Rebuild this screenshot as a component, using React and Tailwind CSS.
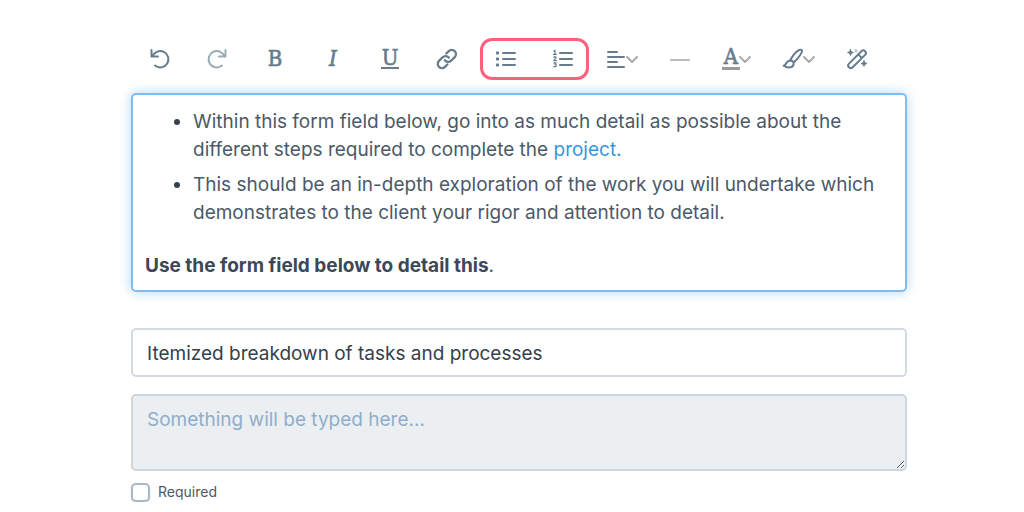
import { useState } from "react"

const stroke = {
    fill: "none",
    stroke: "currentColor",
    strokeWidth: 2,
    strokeLinecap: "round",
    strokeLinejoin: "round",
}

function Icon({ children, width = 22 }) {
    return (
        <svg width={width} height={22} viewBox={`0 0 ${width} 22`} aria-hidden="true" {...stroke}>
            {children}
        </svg>
    )
}

function ToolButton({ label, className = "text-[#667c8c]", children }) {
    return (
        <button
            type="button"
            aria-label={label}
            className={`flex h-6 items-center justify-center ${className}`}
        >
            {children}
        </button>
    )
}

function Letter({ children, className }) {
    return (
        <span className={`text-center font-['DejaVu_Serif_Condensed','DejaVu_Serif',serif] text-[22px] [-webkit-text-stroke:0.6px_currentColor] ${className}`}>
            {children}
        </span>
    )
}

function Chevron() {
    return (
        <svg width="12" height="8" viewBox="0 0 12 8" className="mt-0.5 -ml-px text-[#a9acae]" aria-hidden="true" {...stroke}>
            <path d="M1 1l5 5 5-5" />
        </svg>
    )
}

function Toolbar() {
    return (
        <div role="toolbar" className="flex items-center justify-between pr-[39px] pl-[18px]">
            <div className="flex items-center gap-[35px]">
                <ToolButton label="Undo">
                    <Icon>
                        <path d="M2.500 2v6.500h6.500M3.500 8.500A8.200 8.200 0 1 1 6 17.600" />
                    </Icon>
                </ToolButton>
                <ToolButton label="Redo" className="text-[#9aabb5]">
                    <Icon>
                        <path d="M19.500 2v6.500h-6.500M18.500 8.500A8.200 8.200 0 1 0 16 17.600" />
                    </Icon>
                </ToolButton>
                <ToolButton label="Bold"><Letter className="w-6 leading-6">B</Letter></ToolButton>
                <ToolButton label="Italic"><Letter className="w-[22px] leading-6 italic">I</Letter></ToolButton>
                <ToolButton label="Underline">
                    <span className="mx-0.5 flex flex-col items-center border-b-2 border-current">
                        <Letter className="h-[18px] w-[18px] leading-[18px]">U</Letter>
                    </span>
                </ToolButton>
                <ToolButton label="Insert link">
                    <Icon>
                        <g strokeWidth="2.3">
                            <path d="M8.800 12.300a4.300 4.300 0 0 0 6.300.4l3.600-3.600a4.200 4.200 0 0 0-6-6L10.300 5.500" />
                            <path d="M12.900 9.700a4.300 4.300 0 0 0-6.300-.4L3 12.900a4.200 4.200 0 0 0 6 6l2.400-2.400" />
                        </g>
                    </Icon>
                </ToolButton>

                {/* the two list buttons share one outline */}
                <div className="-ml-[13px] flex h-[42px] items-center gap-[35px] rounded-xl border-3 border-[#fd607a] px-3">
                    <ToolButton label="Bulleted list">
                        <Icon>
                            <path d="M8 5h12M8 11h12M8 17h12" />
                            <path d="M2.500 5h.01M2.500 11h.01M2.500 17h.01" strokeWidth="3.4" />
                        </Icon>
                    </ToolButton>
                    <ToolButton label="Numbered list">
                        <Icon>
                            <path d="M8 5h12M8 11h12M8 17h12" />
                            <path d="M1.800 3l1.200-.7v4M1.500 6.300h2.800M1.800 9.300c.8-1 2.500-.6 2.100.6L1.800 12.600h2.600M1.800 14.900h2.300l-1.200 1.500c2 0 1.800 2.500-.2 2.400l-1-.3" strokeWidth="1.2" />
                        </Icon>
                    </ToolButton>
                </div>
            </div>

            <div className="flex items-center gap-[31px]">
                <ToolButton label="Align">
                    <Icon width={20}>
                        <path d="M1 4h9M1 9h16M1 14h9M1 19h16" />
                    </Icon>
                    <Chevron />
                </ToolButton>
                <ToolButton label="Horizontal line" className="text-[#b8bbbd]">
                    <Icon>
                        <path d="M2 12h18" />
                    </Icon>
                </ToolButton>
                <ToolButton label="Text color">
                    <span className="flex flex-col items-center border-b-3 border-[#9a9a9a]">
                        <Letter className="h-[19px] w-[18px] leading-[18px]">A</Letter>
                    </span>
                    <Chevron />
                </ToolButton>
                <ToolButton label="Highlight color">
                    <Icon>
                        <path d="M8.500 11.500C11 7.500 15.500 2.500 18 1.800c1.800-.4 2.400.8 1.800 2.200-1 3-5 7.500-8 10.500zM8 12.500c2.500 0 4 1.500 3.600 3.700-.6 3.500-5.500 4.500-10 1.500 3-.6 2-4.800 6.400-5.200z" />
                    </Icon>
                    <Chevron />
                </ToolButton>
                <ToolButton label="Clear formatting">
                    <Icon>
                        <path d="M3 15.600L15.400 3.200a2.600 2.600 0 0 1 3.700 3.700L6.700 19.300A2.600 2.600 0 0 1 3 15.600zM12.200 6.400l3.700 3.700" />
                        <g fill="currentColor" strokeWidth="0.800">
                            <path d="M4.500 1.500l.9 2.100 2.100.9-2.100.9-.9 2.100-.9-2.100-2.100-.9 2.100-.9zM18 12.500l.9 2.100 2.100.9-2.100.9-.9 2.100-.9-2.100-2.100-.9 2.100-.9z" />
                            <path d="M10 1.500l.5 1 1 .5-1 .5-.5 1-.5-1-1-.5 1-.5z" opacity="0.5" />
                        </g>
                    </Icon>
                </ToolButton>
            </div>
        </div>
    )
}

export default function App() {
    const [title, setTitle] = useState("Itemized breakdown of tasks and processes")
    const [required, setRequired] = useState(false)

    return (
        <main className="bg-white pt-[38px] pr-[117px] pl-[131px] font-['Inter',sans-serif] text-[#4c5967]">
            <Toolbar />

            <section className="mt-[13px] rounded-[5px] border-2 border-[#7fbcf0] px-3 pt-[13px] pb-2.5 text-[19px] leading-7 shadow-[0_0_12px_rgba(66,153,225,0.4)]">
                <ul className="list-disc space-y-[7px] pl-12 marker:text-[#34424f]">
                    <li>
                        Within this form field below, go into as much detail as possible about the different steps
                        required to complete the <a href="#project" className="text-[#3498db]">project.</a>
                    </li>
                    <li>
                        This should be an in-depth exploration of the work you will undertake which demonstrates
                        to the client your rigor and attention to detail.
                    </li>
                </ul>
                <p className="mt-[25px]"><strong className="font-bold text-[#3b4857]">Use the form field below to detail this</strong>.</p>
            </section>

            <form>
                <input
                    type="text"
                    aria-label="Question title"
                    value={title}
                    onChange={(e) => setTitle(e.target.value)}
                    className="mt-9 block h-[49px] w-full rounded-[5px] border-2 border-[#d3dae1] px-3.5 pt-0.5 text-[19px] text-[#34404c]"
                />
                <textarea
                    aria-label="Answer"
                    placeholder="Something will be typed here..."
                    className="mt-[17px] block h-[77px] w-full resize-y rounded-[5px] border-2 border-[#cdd6dd] bg-[#ebeff2] px-3.5 py-2.5 text-[19px] leading-7 placeholder:text-[#8faecb]"
                />
                <label className="mt-[11px] flex w-fit items-center gap-2 text-sm">
                    <input
                        type="checkbox"
                        checked={required}
                        onChange={(e) => setRequired(e.target.checked)}
                        className="size-[19px] appearance-none rounded-[5px] border-2 border-[#a9b8c7] bg-white shadow-sm checked:bg-[#3498db]"
                    />
                    Required
                </label>
            </form>
        </main>
    )
}
